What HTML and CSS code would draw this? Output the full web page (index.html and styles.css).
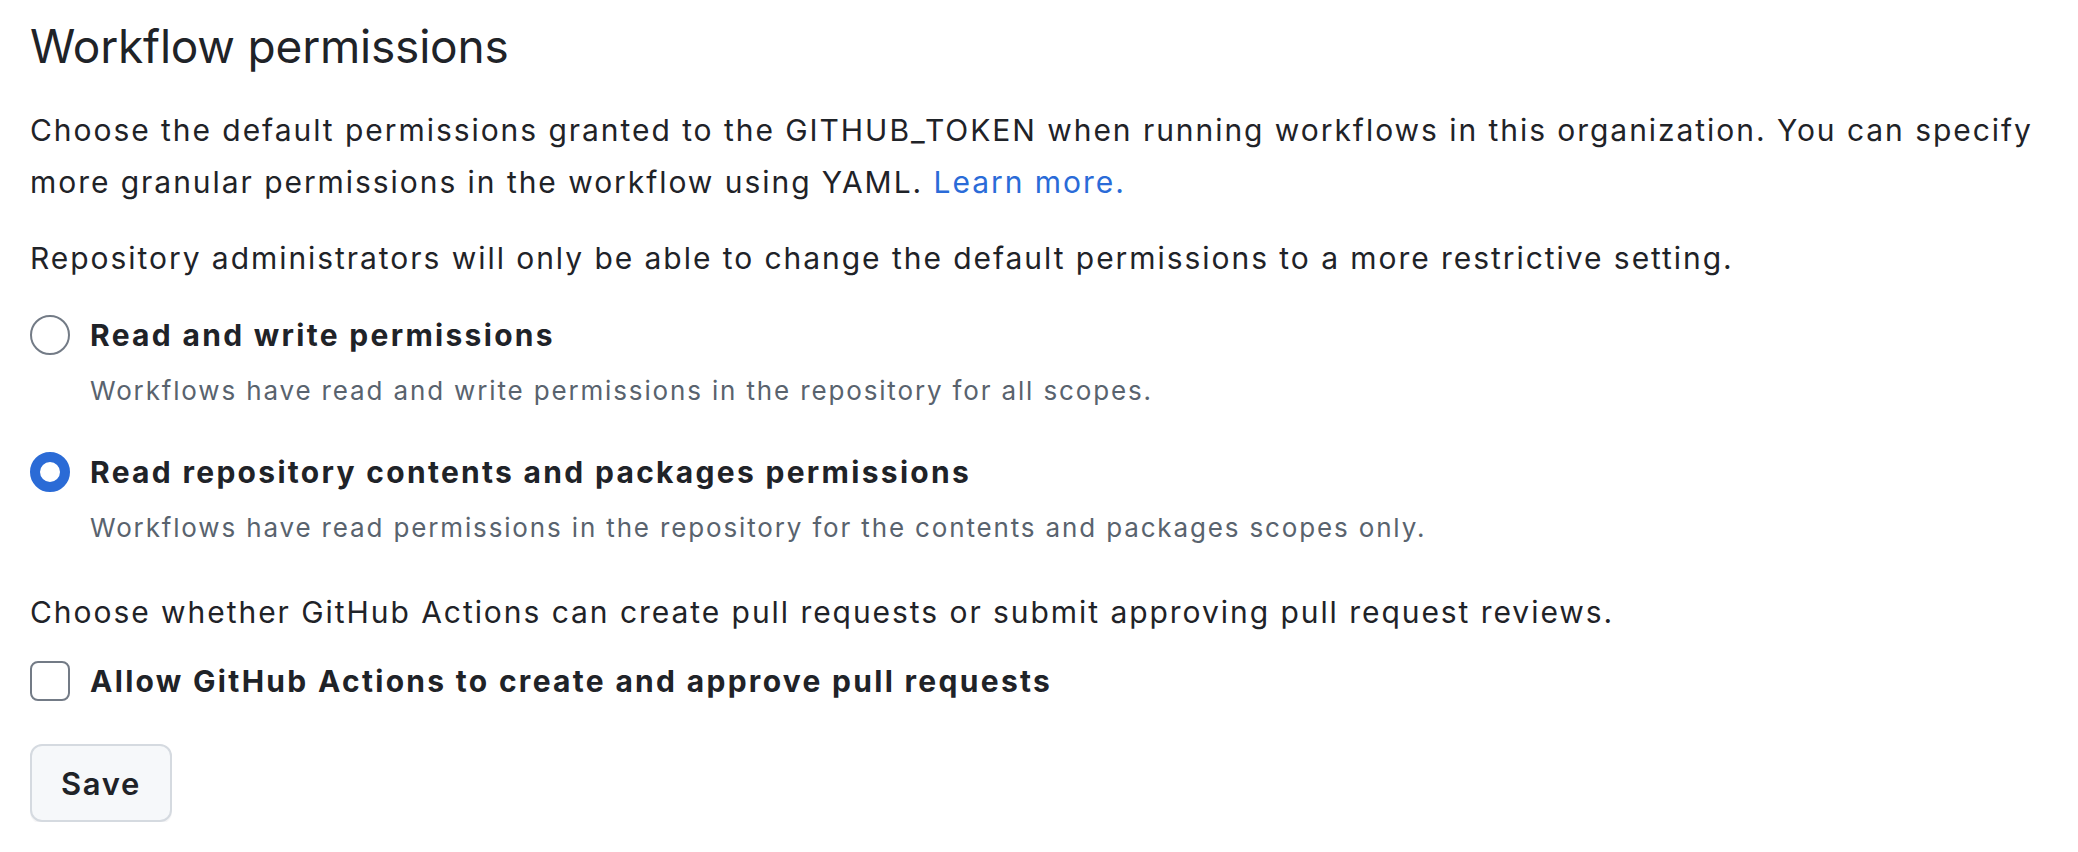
FILE: index.html
```html
<!DOCTYPE html>
<html lang="en">
<head>
<meta charset="utf-8">
<title>Workflow permissions</title>
<link rel="stylesheet" href="styles.css">
</head>
<body>
<main class="page">
  <h2 class="title">Workflow permissions</h2>
  <p class="text intro">Choose the default permissions granted to the GITHUB_TOKEN when running workflows in this organization. You can specify more granular permissions in the workflow using YAML. <a class="link" href="#">Learn more.</a></p>
  <p class="text admin">Repository administrators will only be able to change the default permissions to a more restrictive setting.</p>

  <div class="option first">
    <div class="option-row">
      <span class="radio"></span>
      <span class="label">Read and write permissions</span>
    </div>
    <div class="note">Workflows have read and write permissions in the repository for all scopes.</div>
  </div>

  <div class="option second">
    <div class="option-row">
      <span class="radio checked"></span>
      <span class="label">Read repository contents and packages permissions</span>
    </div>
    <div class="note">Workflows have read permissions in the repository for the contents and packages scopes only.</div>
  </div>

  <p class="text choose">Choose whether GitHub Actions can create pull requests or submit approving pull request reviews.</p>

  <div class="option-row check-row">
    <span class="checkbox"></span>
    <span class="label">Allow GitHub Actions to create and approve pull requests</span>
  </div>

  <div class="actions">
    <button class="btn" type="button">Save</button>
  </div>
</main>
</body>
</html>
```
FILE: styles.css
```css
* { box-sizing: border-box; }

html, body {
  margin: 0;
  background: #ffffff;
}

body {
  font-family: Inter, "Liberation Sans", Arial, sans-serif;
  color: #1f2328;
}

.page {
  padding: 16px 30px 0 30px;
  display: flex;
  flex-direction: column;
  align-items: flex-start;
}

.title {
  margin: 0;
  font-size: 46px;
  line-height: 60px;
  font-weight: 400;
  letter-spacing: -0.2px;
}

.text {
  margin: 0;
  font-size: 30px;
  line-height: 52px;
  letter-spacing: 1.95px;
}

.intro { margin-top: 28px; }
.admin { margin-top: 24px; }

.link {
  color: #2a6bd8;
  text-decoration: none;
}

.option-row {
  display: flex;
  align-items: center;
  gap: 20px;
  height: 52px;
}

.option.first { margin-top: 25px; }
.option.second { margin-top: 33px; }

.radio {
  width: 40px;
  height: 40px;
  border-radius: 50%;
  border: 2px solid #737b86;
  flex: none;
}

.radio.checked {
  border: 10px solid #2b6bd6;
}

.checkbox {
  width: 40px;
  height: 40px;
  border-radius: 8px;
  border: 2px solid #737b86;
  flex: none;
}

.label {
  font-size: 30px;
  font-weight: 700;
  line-height: 52px;
  letter-spacing: 2.3px;
}

.note {
  margin-top: 8px;
  padding-left: 60px;
  font-size: 26px;
  line-height: 44px;
  color: #59636e;
  letter-spacing: 1.85px;
}

.choose { margin-top: 36px; }
.check-row { margin-top: 17px; }

.actions { margin-top: 37px; }

.btn {
  font-family: inherit;
  font-size: 31px;
  font-weight: 600;
  letter-spacing: 1.6px;
  color: #1f2328;
  background: #f6f8fa;
  border: 2px solid #d5dae0;
  border-radius: 12px;
  width: 142px;
  height: 78px;
  padding: 0;
  box-shadow: 0 2px 0 rgba(31, 35, 40, 0.04);
}
```
